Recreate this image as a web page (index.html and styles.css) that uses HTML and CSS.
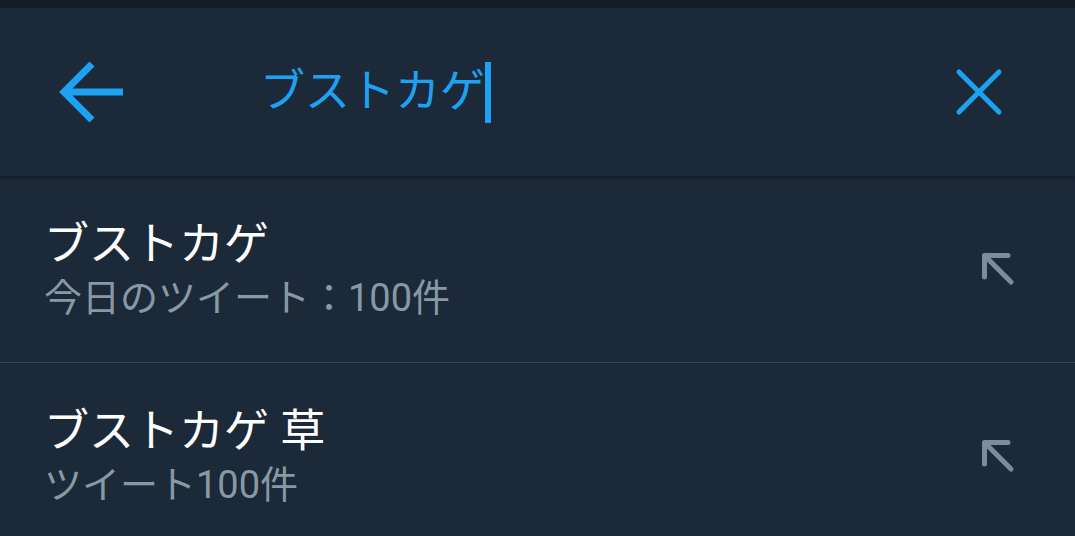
FILE: index.html
```html
<!DOCTYPE html>
<html lang="ja">
<head>
<meta charset="utf-8">
<title>検索</title>
<link rel="stylesheet" href="styles.css">
</head>
<body>
<div class="statusbar"></div>
<header class="searchbar">
  <button class="icon-btn back" aria-label="戻る">
    <svg width="64" height="64" viewBox="0 0 64 64"><path d="M64 32 H5 M33 4 L5 32 L33 60" fill="none" stroke="#1da1f2" stroke-width="7" stroke-linejoin="miter" stroke-linecap="butt"/></svg>
  </button>
  <div class="query"><span class="query-text">ブストカゲ</span><span class="caret"></span></div>
  <button class="icon-btn clear" aria-label="クリア">
    <svg width="48" height="48" viewBox="0 0 48 48"><path d="M4 4 L44 44 M44 4 L4 44" fill="none" stroke="#1da1f2" stroke-width="5" stroke-linecap="round"/></svg>
  </button>
</header>
<main class="suggestions">
  <div class="row">
    <div class="row-text">
      <div class="title">ブストカゲ</div>
      <div class="sub">今日のツイート：100件</div>
    </div>
    <svg class="fill-icon" width="36" height="36" viewBox="0 0 36 36"><path d="M28 4.5 H4.5 V26 M4.5 4.5 L31 31" fill="none" stroke="#7b8c9b" stroke-width="5" stroke-linecap="round" stroke-linejoin="round"/></svg>
  </div>
  <div class="row">
    <div class="row-text">
      <div class="title">ブストカゲ 草</div>
      <div class="sub">ツイート100件</div>
    </div>
    <svg class="fill-icon" width="36" height="36" viewBox="0 0 36 36"><path d="M28 4.5 H4.5 V26 M4.5 4.5 L31 31" fill="none" stroke="#7b8c9b" stroke-width="5" stroke-linecap="round" stroke-linejoin="round"/></svg>
  </div>
</main>
</body>
</html>
```

FILE: styles.css
```css
html, body {
  margin: 0;
  padding: 0;
  background: #1c2938;
  height: 100%;
  overflow: hidden;
}
body {
  font-family: Roboto, "Noto Sans CJK JP", sans-serif;
  color: #ffffff;
}
.statusbar {
  height: 8px;
  background: #141d26;
}
.searchbar {
  position: relative;
  z-index: 1;
  height: 168px;
  background: #1c2938;
  display: flex;
  align-items: center;
  padding: 0 72px 0 59px;
  box-shadow: 0 2px 4px rgba(0, 0, 0, 0.35);
}
.icon-btn {
  background: none;
  border: 0;
  padding: 0;
  margin: 0;
  display: flex;
}
.icon-btn svg { display: block; }
.query {
  flex: 1;
  display: flex;
  align-items: center;
  margin-left: 137px;
  color: #1da1f2;
  font-size: 45px;
  line-height: 60px;
}
.caret {
  width: 6px;
  height: 61px;
  background: #1da1f2;
  margin-left: 0;
}
.row {
  height: 186px;
  display: flex;
  align-items: center;
  padding: 0 59px 0 44px;
  border-bottom: 1px solid #38444d;
}
.row-text {
  flex: 1;
}
.title {
  font-size: 45px;
  line-height: 58px;
  color: #ffffff;
}
.sub {
  font-size: 38px;
  line-height: 48px;
  color: #8899a6;
}
.fill-icon { display: block; }
```
